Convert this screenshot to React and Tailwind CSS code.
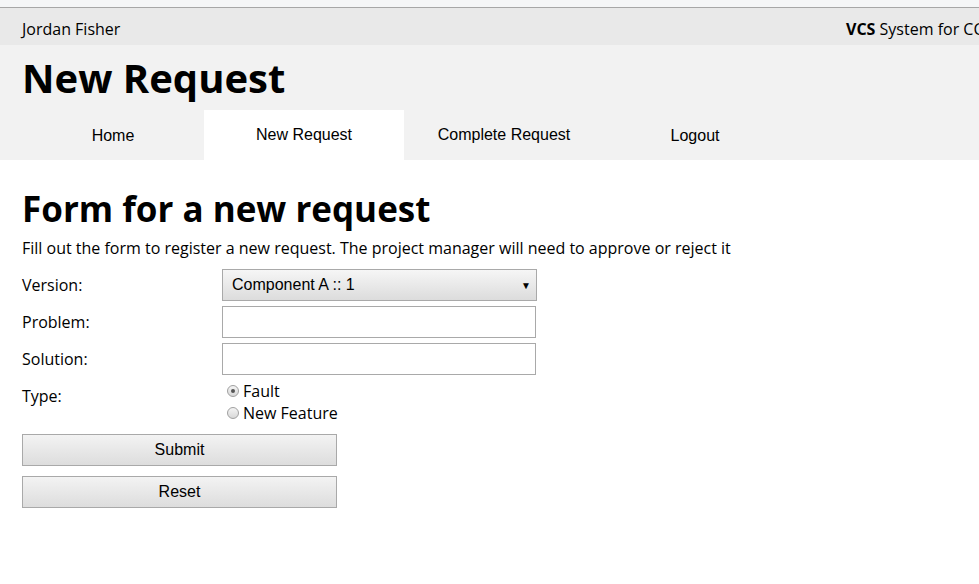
import React from "react";

function Radio({ checked }) {
  return (
    <span className="relative inline-block w-[12px] h-[12px] rounded-full border border-[#a0a0a0] bg-gradient-to-b from-[#f4f4f4] to-[#d8d8d8] mr-[4px]">
      {checked && (
        <span className="absolute left-[3px] top-[3px] w-[4px] h-[4px] rounded-full bg-[#555]" />
      )}
    </span>
  );
}

export default function App() {
  const btn =
    "w-[315px] h-[32px] border border-[#a9a9a9] bg-gradient-to-b from-[#f3f3f3] to-[#dddddd] text-[16px] text-black font-['Liberation_Sans',Arial,sans-serif]";
  const input = "w-[314px] h-[32px] border border-[#a9a9a9] bg-white";
  return (
    <div className="w-[979px] h-[584px] bg-white overflow-hidden text-black font-['Open_Sans',sans-serif]">
      <div className="h-[7px] bg-[#f5f6f7] border-b border-[#a7a7a7] box-content" />
      <div className="h-[37px] bg-[#e9e9e9] flex items-center pl-[22px] pt-[5px] text-[16px] whitespace-nowrap overflow-hidden">
        <span className="w-[824px] shrink-0">Jordan Fisher</span>
        <span className="shrink-0">
          <b>VCS</b> System for CCG
        </span>
      </div>
      <div className="bg-[#f2f2f2]">
        <h1 className="h-[65px] pl-[22px] text-[40px] font-bold leading-[65px]">New Request</h1>
        <nav className="flex h-[50px] pl-[22px] text-[16px] font-['Liberation_Sans',Arial,sans-serif]">
          <span className="w-[182px] flex items-center justify-center pt-[2px]">Home</span>
          <span className="w-[200px] flex items-center justify-center bg-white">New Request</span>
          <span className="w-[200px] flex items-center justify-center">Complete Request</span>
          <span className="w-[182px] flex items-center justify-center pt-[2px]">Logout</span>
        </nav>
      </div>
      <div className="pl-[22px] pt-[27px]">
        <h2 className="text-[35px] font-bold leading-[44px]">Form for a new request</h2>
        <p className="text-[16px] leading-[22px] mt-[6px]">
          Fill out the form to register a new request. The project manager will need to approve or reject it
        </p>
        <div className="mt-[10px] flex flex-col gap-[5px] text-[16px]">
          <div className="flex items-center">
            <span className="w-[200px]">Version:</span>
            <div className="w-[315px] h-[32px] border border-[#a9a9a9] bg-gradient-to-b from-[#f6f6f6] to-[#dcdcdc] flex items-center justify-between pl-[9px] pr-[5px] font-['Liberation_Sans',Arial,sans-serif]">
              <span>Component A :: 1</span>
              <span className="text-[10px]">▼</span>
            </div>
          </div>
          <div className="flex items-center">
            <span className="w-[200px]">Problem:</span>
            <div className={input} />
          </div>
          <div className="flex items-center">
            <span className="w-[200px]">Solution:</span>
            <div className={input} />
          </div>
          <div className="flex items-start">
            <span className="w-[200px] pt-[4px]">Type:</span>
            <div className="flex flex-col pl-[5px] leading-[22px]">
              <label className="flex items-center"><Radio checked />Fault</label>
              <label className="flex items-center"><Radio />New Feature</label>
            </div>
          </div>
        </div>
        <div className="mt-[10px] flex flex-col gap-[10px]">
          <button className={btn}>Submit</button>
          <button className={btn}>Reset</button>
        </div>
      </div>
    </div>
  );
}
